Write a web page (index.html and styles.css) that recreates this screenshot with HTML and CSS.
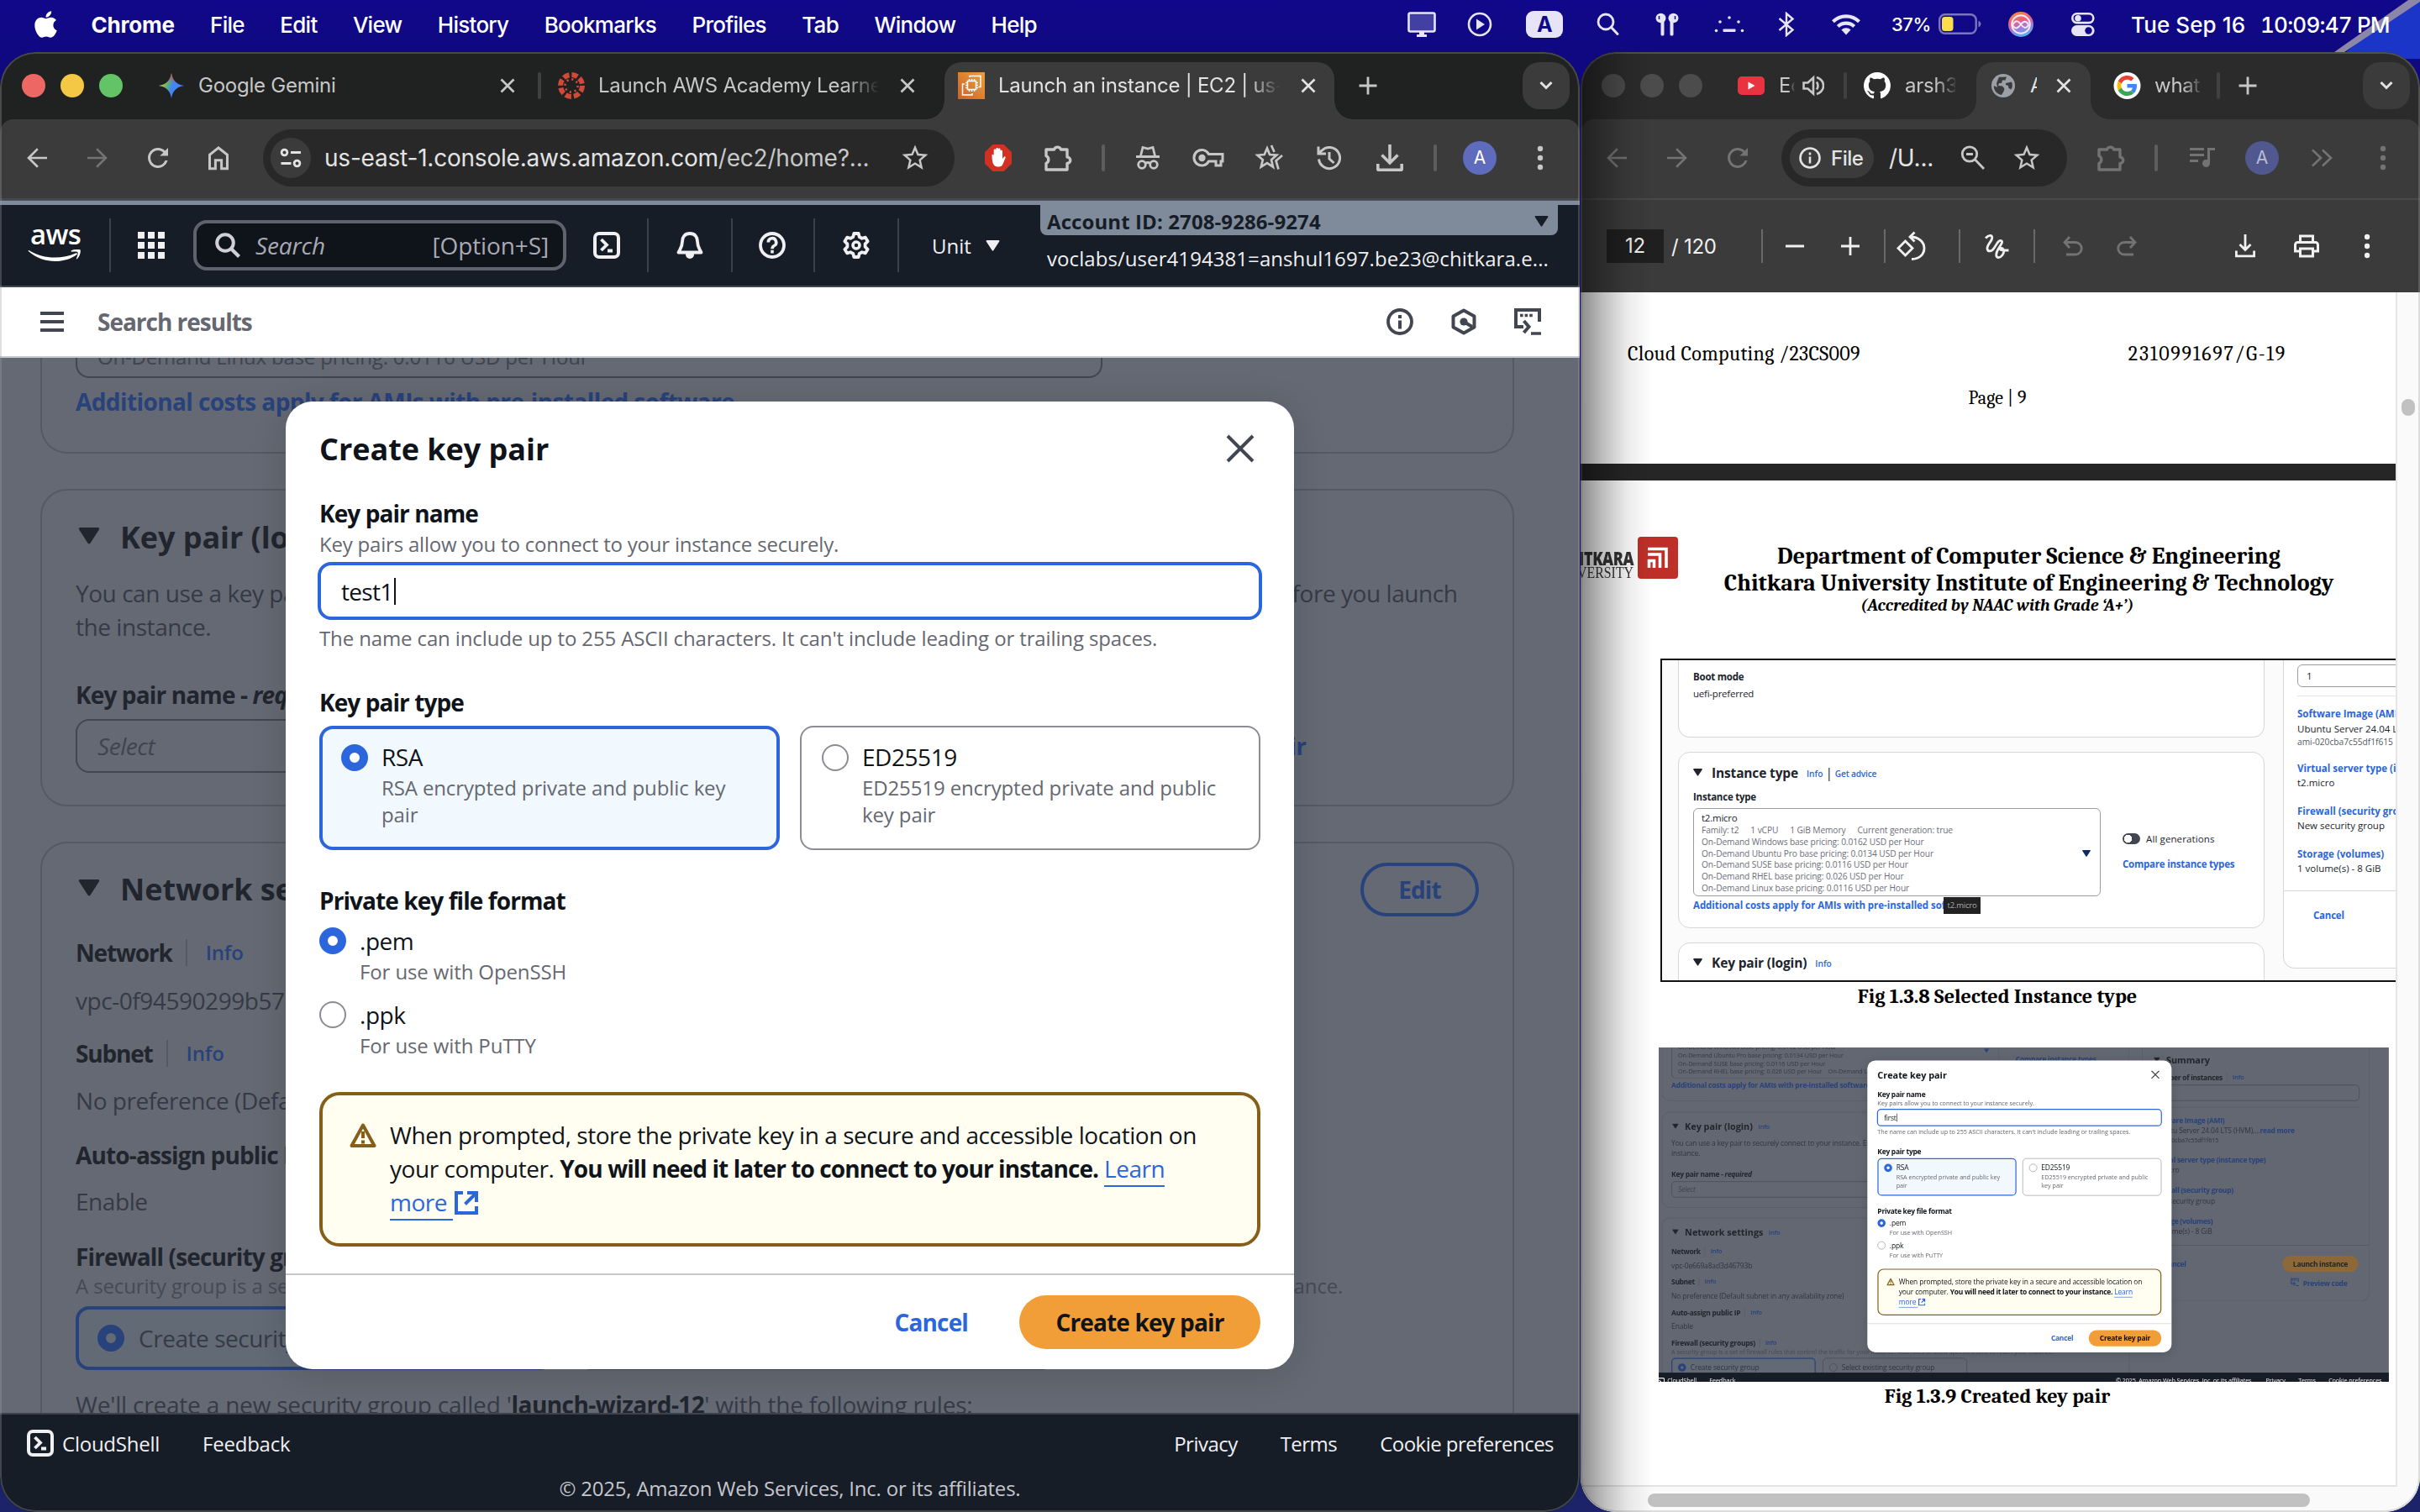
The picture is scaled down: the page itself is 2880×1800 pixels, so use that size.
FILE: index.html
```html
<!DOCTYPE html>
<html lang="en">
<head>
<meta charset="utf-8">
<title>Launch an instance | EC2</title>
<link rel="stylesheet" href="styles.css">
</head>
<body>
<svg width="0" height="0" class="defs">
  <symbol id="i-back" viewBox="0 0 24 24"><path fill="currentColor" d="M20 11.1H7.5l5.6-5.6L12 4.2l-7.9 7.8L12 19.800l1.200-1.300-5.700-5.600H20z"/></symbol>
  <symbol id="i-fwd" viewBox="0 0 24 24"><path fill="currentColor" d="M4 11.100h12.500l-5.600-5.600L12 4.200l7.900 7.800L12 19.800l-1.200-1.300 5.700-5.600H4z"/></symbol>
  <symbol id="i-reload" viewBox="0 0 24 24"><path fill="currentColor" d="M17.650 6.350A7.960 7.960 0 0 0 12 4a8 8 0 1 0 7.730 10h-2.080A6 6 0 1 1 12 6c1.660 0 3.140.69 4.220 1.780L13.500 10.400H20V4z"/></symbol>
  <symbol id="i-home" viewBox="0 0 24 24"><path fill="none" stroke="currentColor" stroke-width="2" d="M5 20.500V9.500L12 4l7 5.500v11h-4.600v-6.600H9.600v6.600z"/></symbol>
  <symbol id="i-star" viewBox="0 0 24 24"><path fill="currentColor" d="M22 9.240l-7.190-.62L12 2 9.190 8.630 2 9.240l5.460 4.730L5.820 21 12 17.270 18.180 21l-1.630-7.030zM12 15.400l-3.760 2.270 1-4.280-3.320-2.880 4.380-.38L12 6.100l1.710 4.040 4.380.38-3.320 2.880 1 4.280z"/></symbol>
  <symbol id="i-puzzle" viewBox="0 0 40 40"><path fill="none" stroke="currentColor" stroke-width="3.400" stroke-linejoin="round" d="M6 10h9.500a4.200 4.200 0 0 1 8 0H31v9a3.600 3.600 0 0 1 0 7.500V34H6v-7.500a5 5 0 0 0 0-9z"/></symbol>
  <symbol id="i-close" viewBox="0 0 20 20"><path stroke="currentColor" stroke-width="2.700" d="M2.500 2.500l15 15m0-15l-15 15"/></symbol>
  <symbol id="i-plus" viewBox="0 0 24 24"><path stroke="currentColor" stroke-width="2.800" d="M12 1.500v21M1.500 12h21"/></symbol>
  <symbol id="i-chev" viewBox="0 0 20 20"><path fill="none" stroke="currentColor" stroke-width="3" d="M3.500 6l6.500 6.500L16.500 6"/></symbol>
  <symbol id="i-kebab" viewBox="0 0 40 40"><g fill="currentColor"><circle cx="20" cy="9" r="3.200"/><circle cx="20" cy="20" r="3.200"/><circle cx="20" cy="31" r="3.200"/></g></symbol>
  <symbol id="i-down" viewBox="0 0 40 40"><path fill="none" stroke="currentColor" stroke-width="3.600" d="M20 4v22M10.500 16.500L20 26l9.500-9.500M5.800 27v6.300a1 1 0 0 0 1 1h26.400a1 1 0 0 0 1-1V27"/></symbol>
  <symbol id="i-tri" viewBox="0 0 20 16"><path fill="currentColor" d="M1.500 0h17a1.200 1.200 0 0 1 1 1.900l-8.400 13a1.300 1.300 0 0 1-2.200 0L.5 1.900A1.200 1.200 0 0 1 1.500 0z"/></symbol>
  <symbol id="i-shell" viewBox="0 0 32 32"><rect x="2" y="2" width="28" height="28" rx="5" fill="none" stroke="currentColor" stroke-width="4"/><path fill="none" stroke="currentColor" stroke-width="3.800" d="M9.500 9l6.500 6.500L9.500 22M17 22.500h6"/></symbol>
  <symbol id="i-x" viewBox="0 0 34 34"><path stroke="currentColor" stroke-width="4" d="M2 2l30 30m0-30L2 32"/></symbol>
  <symbol id="i-warn" viewBox="0 0 32 32"><path fill="none" stroke="#855f1a" stroke-width="4" stroke-linejoin="round" d="M16 3.500L29.500 28h-27z"/><path stroke="#855f1a" stroke-width="4" d="M16 11v8m0 2.500v4"/></symbol>
  <symbol id="i-ext" viewBox="0 0 28 28"><path fill="none" stroke="#2c66dd" stroke-width="4" d="M10 2H2v24h24v-8M15 2h11v11M26 2L12.500 15.500"/></symbol>
  <symbol id="i-preview" viewBox="0 0 32 32"><path fill="none" stroke="currentColor" stroke-width="4" d="M30 16V2H2v20h9M11.500 15l6 7-6 7"/><path stroke="currentColor" stroke-width="3.600" d="M7 8.500h3.600m2 0h3.600m2 0h3.600M20 30h12"/></symbol>
</svg>

<svg class="wallpaper" viewBox="0 0 140 70"><path fill="#1a35c8" d="M52 62L140-10v80H40z"/><path fill="#8c86a8" d="M38 62L126 0h14v2L50 62z"/></svg>

<header class="menubar">
  <nav class="menus">
    <svg class="apple" viewBox="0 0 384 512"><path fill="#fff" d="M318.700 268.700c-.2-36.700 16.400-64.400 50-84.800-18.800-26.900-47.200-41.700-84.700-44.600-35.500-2.800-74.300 20.700-88.500 20.700-15 0-49.400-19.700-76.400-19.700C63.300 141.200 4 184.800 4 273.500q0 39.300 14.400 81.200c12.800 36.700 59 126.700 107.200 125.200 25.200-.6 43-17.900 75.800-17.900 31.800 0 48.300 17.900 76.400 17.900 48.600-.7 90.400-82.500 102.600-119.300-65.200-30.700-61.700-90-61.700-91.900zm-56.600-164.200c27.300-32.400 24.800-61.900 24-72.500-24.100 1.400-52 16.400-67.900 34.900-17.500 19.800-27.800 44.300-25.600 71.900 26.100 2 49.900-11.400 69.500-34.300z"/></svg>
    <b>Chrome</b><span>File</span><span>Edit</span><span>View</span><span>History</span><span>Bookmarks</span><span>Profiles</span><span>Tab</span><span>Window</span><span>Help</span>
  </nav>
  <div class="status">
    <svg width="34" height="30" viewBox="0 0 34 30"><rect x="1.500" y="1.500" width="31" height="22" rx="2" fill="#4340a4" stroke="#e6e4f6" stroke-width="2.600"/><path fill="#e6e4f6" d="M14 24h6v3h3v3H11v-3h3z"/></svg>
    <svg width="30" height="30" viewBox="0 0 30 30"><circle cx="15" cy="15" r="13" fill="none" stroke="#e6e4f6" stroke-width="2.600"/><path fill="#e6e4f6" d="M11 8.500v13l10-6.500z"/></svg>
    <span class="input-src">A</span>
    <svg width="28" height="28" viewBox="0 0 28 28"><circle cx="11" cy="11" r="9" fill="none" stroke="#e6e4f6" stroke-width="2.800"/><path stroke="#e6e4f6" stroke-width="3" stroke-linecap="round" d="M17.500 17.500l7.500 8"/></svg>
    <svg width="28" height="28" viewBox="0 0 28 28"><g fill="#e6e4f6"><ellipse cx="6.500" cy="6.500" rx="6" ry="5.800"/><ellipse cx="21.500" cy="6.500" rx="6" ry="5.800"/><rect x="6.500" y="8" width="4" height="19.500" rx="1.600"/><rect x="17.500" y="8" width="4" height="19.500" rx="1.600"/></g><path stroke="#10088a" stroke-width="1.500" d="M4.500 4v4M23.500 4v4"/></svg>
    <svg width="36" height="22" viewBox="0 0 36 22"><g fill="#e6e4f6"><circle cx="2.500" cy="18.500" r="1.800"/><circle cx="7" cy="8" r="1.800"/><circle cx="18" cy="3" r="1.800"/><circle cx="29" cy="8" r="1.800"/><circle cx="33.500" cy="18.500" r="1.800"/><rect x="10.500" y="16.500" width="15" height="3.600" rx="1"/></g></svg>
    <svg width="20" height="30" viewBox="0 0 20 30"><path fill="none" stroke="#e6e4f6" stroke-width="2.400" d="M1.500 8l16 13.500L10 28V2l7.500 6.500L1.500 22"/></svg>
    <svg width="36" height="26" viewBox="0 0 36 26"><g fill="none" stroke="#e6e4f6" stroke-width="4.200"><path d="M2.500 9.800a22 22 0 0 1 31 0"/><path d="M8.300 15.600a14 14 0 0 1 19.400 0"/></g><path fill="#e6e4f6" d="M18 25.500l-5.600-6a8 8 0 0 1 11.200 0z"/></svg>
    <span class="pct">37%</span>
    <svg width="52" height="26" viewBox="0 0 52 26"><rect x="1.200" y="1.200" width="43.500" height="22.600" rx="6.500" fill="none" stroke="#7a76bd" stroke-width="2.400"/><rect x="4" y="4" width="13.500" height="17" rx="3.500" fill="#fbdd4d"/><path fill="#7a76bd" d="M47.500 8.500q3 1.500 3 4t-3 4z"/></svg>
    <svg width="30" height="30" viewBox="0 0 30 30"><defs><linearGradient id="siri" x1=".3" y1="0" x2=".6" y2="1"><stop offset="0" stop-color="#f2913d"/><stop offset=".35" stop-color="#e8617c"/><stop offset=".65" stop-color="#a07be0"/><stop offset="1" stop-color="#4db8f0"/></linearGradient></defs><circle cx="15" cy="15" r="15" fill="url(#siri)"/><circle cx="15" cy="15" r="10.800" fill="none" stroke="#f3e9f6" stroke-width="2"/><path fill="none" stroke="#f3e9f6" stroke-width="2" d="M5 16c4-7 7-5 10-1s6 6 9 1c-2-6-6-5-9-1s-6 7-10 1z"/></svg>
    <svg width="28" height="28" viewBox="0 0 28 28"><rect x="1.300" y="1.300" width="25" height="10.800" rx="5.400" fill="none" stroke="#e6e4f6" stroke-width="2.600"/><circle cx="8" cy="6.700" r="3.800" fill="#e6e4f6"/><rect x="0" y="15" width="27.600" height="13" rx="6.500" fill="#e6e4f6"/><circle cx="20.500" cy="21.500" r="4.200" fill="#10088a"/></svg>
    <span class="day">Tue Sep 16</span><span class="clock">10:09:47</span><span class="pm">PM</span>
  </div>
</header>

<section class="window win-aws">
  <div class="tabs tabs-aws">
    <div class="lights"><i class="r"></i><i class="y"></i><i class="g"></i></div>
    <svg width="32" height="32" viewBox="0 0 32 32"><defs><linearGradient id="gem" x1="0" y1=".3" x2="1" y2=".6"><stop offset=".05" stop-color="#f5c63a"/><stop offset=".35" stop-color="#5bb572"/><stop offset=".55" stop-color="#4285f4"/><stop offset="1" stop-color="#4285f4"/></linearGradient><linearGradient id="gem2" x1="0" y1="0" x2="0" y2="1"><stop offset="0" stop-color="#ea4335"/><stop offset=".4" stop-color="#ea4335" stop-opacity="0"/></linearGradient></defs><path fill="url(#gem)" d="M16 1c1.400 8.500 5.500 13.400 15 15-9.500 1.600-13.600 6.500-15 15-1.400-8.500-5.500-13.400-15-15C10.500 14.400 14.600 9.500 16 1z"/><path fill="url(#gem2)" d="M16 1c1.400 8.500 5.500 13.400 15 15-9.500 1.600-13.600 6.500-15 15-1.400-8.500-5.500-13.400-15-15C10.500 14.400 14.600 9.500 16 1z"/></svg>
    <span class="tab-t">Google Gemini</span>
    <svg class="c" width="20" height="20"><use href="#i-close"/></svg>
    <i class="tdiv"></i>
    <svg width="32" height="32" viewBox="0 0 32 32"><circle cx="16" cy="16" r="13" fill="none" stroke="#d14a38" stroke-width="6" stroke-dasharray="7.200 3.010"/><circle cx="16" cy="16" r="7.600" fill="none" stroke="#d14a38" stroke-width="2.600" stroke-dasharray="2.200 3.770"/></svg>
    <span class="tab-t fade w332">Launch AWS Academy Learner Lab</span>
    <svg class="c" width="20" height="20"><use href="#i-close"/></svg>
    <div class="tab-on">
      <svg width="32" height="32" viewBox="0 0 32 32"><defs><linearGradient id="ec2" x1="0" y1="1" x2="1" y2="0"><stop offset="0" stop-color="#c8622c"/><stop offset="1" stop-color="#f0a03a"/></linearGradient></defs><rect width="32" height="32" fill="url(#ec2)"/><g fill="none" stroke="#fff" stroke-width="1.500"><rect x="11.500" y="10.500" width="10" height="10"/><path d="M13.500 8v2.500m3-2.500v2.500m3-2.500v2.500m-6 10V23m3-2.500V23m3-2.500V23M9 12.500h2.500M9 15.500h2.500M9 18.500h2.500m10-6H24m-2.500 3H24m-2.500 3H24M14 6V4.500h13v13h-2.500M8 14H5.500v13H17V25"/></g></svg>
      <span class="tab-t fade">Launch an instance | EC2 | us-east-1</span>
      <svg class="c" width="20" height="20"><use href="#i-close"/></svg>
    </div>
    <svg class="c" width="24" height="24"><use href="#i-plus"/></svg>
    <div class="tab-menu"><svg width="20" height="20"><use href="#i-chev"/></svg></div>
  </div>
  <div class="toolbar tb-aws">
    <svg><use href="#i-back" x="2" y="2" width="36" height="36"/></svg>
    <svg class="dim"><use href="#i-fwd" x="2" y="2" width="36" height="36"/></svg>
    <svg><use href="#i-reload" x="2" y="2" width="36" height="36"/></svg>
    <svg><use href="#i-home" x="2" y="2" width="36" height="36"/></svg>
    <div class="omni">
      <div class="tune"><svg viewBox="0 0 26 26" class="s26"><g fill="none" stroke="#e3e3e3" stroke-width="2.800"><circle cx="5.500" cy="6.500" r="3.400"/><path d="M13 6.500h12M1.500 19.500h12"/><circle cx="20.500" cy="19.500" r="3.400"/></g></svg></div>
      <span class="url">us-east-1.console.aws.amazon.com<em>/ec2/home?...</em></span>
      <svg><use href="#i-star" x="1.500" y="1.500" width="37" height="37"/></svg>
    </div>
    <svg viewBox="0 0 40 40"><path fill="#d13023" d="M13.300 4h13.400L36 13.300v13.400L26.700 36H13.300L4 26.700V13.300z"/><path fill="#fff" d="M12.500 16c1.500-.5 2 .5 2.200 1.200V11c0-2 2.600-2 2.600 0V9.500c0-2 2.700-2 2.700 0V10c0-1.900 2.600-1.900 2.600 0v2c0-1.800 2.400-1.800 2.400 0v9l1.500-2c1-1.200 2.700-.6 2 1-1.500 3.500-2.500 7-4 9-1.500 2-7.500 2.200-9.500-.5-1.800-2.500-2.500-6-2.500-12.500z"/></svg>
    <svg><use href="#i-puzzle"/></svg>
    <i class="bdiv"></i>
    <svg viewBox="0 0 40 40"><g fill="none" stroke="currentColor" stroke-width="2.800"><path d="M6 18.500h28M11.500 17.500L14 7.500l6 1.500 6-1.500 2.500 10"/><circle cx="13" cy="28" r="4.300"/><circle cx="27" cy="28" r="4.300"/><path d="M17 26.500q3-2 6 0"/></g></svg>
    <svg viewBox="0 0 40 40"><g fill="none" stroke="currentColor" stroke-width="3"><path d="M20.500 15.500H37V24h-2v5h-6v-5h-8.500A9.300 9.300 0 1 1 20.500 15.500z"/></g><circle cx="12.500" cy="20" r="4.200" fill="currentColor"/></svg>
    <svg viewBox="0 0 40 40"><path fill="none" stroke="currentColor" stroke-width="2.700" d="M18 8.500l3 7.500 8.300.7-6.300 5.500 2 8.500-7-4.500-7.200 4.500 2-8.500-6.300-5.500 8.200-.7zM23 5l3.500 8M36 17l-7.500 6.500 3 10"/></svg>
    <svg viewBox="0 0 40 40"><path fill="none" stroke="currentColor" stroke-width="3" d="M7.500 21.500a12.600 12.600 0 1 0 3.500-10.300L7 15M7 6.500V15h9M20 13v8l5.500 5"/></svg>
    <svg><use href="#i-down"/></svg>
    <i class="bdiv"></i>
    <div class="avatar">A</div>
    <svg><use href="#i-kebab"/></svg>
  </div>
  <div class="band"></div>
  <div class="aws-head">
    <div class="logo"><span>aws</span><svg width="66" height="16" viewBox="0 0 66 16"><path fill="#fff" d="M1.500 1C18 11.500 40 12 57 4.500c1.500-.6 2.500.8 1.200 1.800C44 17 18 17.500 1 2.300.3 1.500.8.6 1.500 1z"/><path fill="#fff" d="M52 1.300c3-1.800 9.500-2 10.500-.8 1 1.500-.5 8-3.800 10.800-.6.5-1 .2-.8-.4.900-2.200 2.400-6.500 1.500-7.700-.8-1-5-.7-7-.4-.8 0-.9-.8-.4-1.500z"/></svg></div>
    <i class="hdiv"></i>
    <svg width="32" height="32" viewBox="0 0 32 32"><g fill="#f0f0f3"><rect width="8" height="8"/><rect x="12" width="8" height="8"/><rect x="24" width="8" height="8"/><rect y="12" width="8" height="8"/><rect x="12" y="12" width="8" height="8"/><rect x="24" y="12" width="8" height="8"/><rect y="24" width="8" height="8"/><rect x="12" y="24" width="8" height="8"/><rect x="24" y="24" width="8" height="8"/></g></svg>
    <div class="search"><svg width="30" height="30" viewBox="0 0 30 30"><circle cx="12" cy="12" r="9.800" fill="none" stroke="#d0d0d8" stroke-width="4"/><path stroke="#d0d0d8" stroke-width="4.200" d="M19 19l9.500 9.500"/></svg><em>Search</em><span>[Option+S]</span></div>
    <svg width="32" height="32"><use href="#i-shell"/></svg>
    <i class="hdiv"></i>
    <svg width="32" height="32" viewBox="0 0 32 32"><path fill="none" stroke="currentColor" stroke-width="3.800" stroke-linejoin="round" d="M16 2c-6 0-9 4-9 9.500 0 6.500-2.500 9-4.500 13h27c-2-4-4.500-6.500-4.500-13C25 6 22 2 16 2z"/><path fill="currentColor" d="M11 25h10v2a5 5 0 0 1-10 0z"/></svg>
    <i class="hdiv"></i>
    <svg width="32" height="32" viewBox="0 0 32 32"><circle cx="16" cy="16" r="14" fill="none" stroke="currentColor" stroke-width="3.800"/><path fill="none" stroke="currentColor" stroke-width="3.600" d="M11.300 12.500a4.700 4.700 0 1 1 7 4c-1.700 1-2.300 1.600-2.300 3.700M16 21.800v3.600"/></svg>
    <i class="hdiv"></i>
    <svg width="32" height="32" viewBox="0 0 32 32"><path fill="none" stroke="currentColor" stroke-width="3.800" stroke-linejoin="round" d="M13.300 2h5.400l1 4 3.200 1.800 4-1.200 2.700 4.700-3 3v3.500l3 3-2.700 4.600-4-1.200L19.700 26l-1 4h-5.400l-1-4-3.200-1.800-4 1.200-2.700-4.600 3-3v-3.500l-3-3 2.700-4.700 4 1.200L12.300 6z"/><circle cx="16" cy="16" r="4" fill="none" stroke="currentColor" stroke-width="3.600"/></svg>
    <i class="hdiv"></i>
    <span class="unit">Unit</span>
    <svg width="17" height="13"><use href="#i-tri"/></svg>
    <div class="account"><div class="acc-id"><b>Account ID: 2708-9286-9274</b><svg width="17" height="13"><use href="#i-tri"/></svg></div><span>voclabs/user4194381=anshul1697.be23@chitkara.e...</span></div>
  </div>
  <div class="crumbs">
    <div class="burger"><i></i><i></i><i></i></div>
    <b>Search results</b>
    <svg width="32" height="32" viewBox="0 0 32 32"><circle cx="16" cy="16" r="14" fill="none" stroke="currentColor" stroke-width="3.800"/><path stroke="currentColor" stroke-width="4" d="M16 8v4m0 2.500v10"/></svg>
    <svg width="32" height="32" viewBox="0 0 32 32"><path fill="none" stroke="currentColor" stroke-width="4" stroke-linejoin="round" d="M16 2.500l12.500 7v13L16 29.500l-12.500-7v-13z"/><circle cx="16" cy="16" r="4.600" fill="currentColor"/><path stroke="currentColor" stroke-width="4" d="M16 16l10 6"/></svg>
    <svg width="32" height="32"><use href="#i-preview"/></svg>
  </div>
  <main class="content">
    <div class="card c1">
      <div class="sel top"><span class="s">On-Demand Linux base pricing: 0.0116 USD per Hour</span></div>
      <b class="lnk add">Additional costs apply for AMIs with pre-installed software</b>
    </div>
    <div class="card c2">
      <h2><svg width="26" height="20"><use href="#i-tri"/></svg>Key pair (login)</h2>
      <p class="para">You can use a key pair to securely connect to your instance. Ensure that you have access to the selected key pair before you launch<br>the instance.</p>
      <b class="lab">Key pair name - <em>required</em></b>
      <div class="selrow"><div class="sel"><em>Select</em></div><b class="lnk">Create new key pair</b></div>
    </div>
    <div class="card c3">
      <div class="hrow"><h2><svg width="26" height="20"><use href="#i-tri"/></svg>Network settings</h2><span class="edit">Edit</span></div>
      <div class="r n1"><b>Network</b><b class="info">Info</b></div>
      <div class="r n2">vpc-0f94590299b57e3a1</div>
      <div class="r n3"><b>Subnet</b><b class="info">Info</b></div>
      <div class="r n4">No preference (Default subnet in any availability zone)</div>
      <div class="r n5"><b>Auto-assign public IP</b></div>
      <div class="r n6">Enable</div>
      <div class="r n7"><b>Firewall (security groups)</b></div>
      <div class="hint">A security group is a set of firewall rules that control the traffic for your instance. Add rules to allow specific traffic to reach your instance.</div>
      <div class="tiles"><div class="tile on"><i></i>Create security group</div><div class="tile"><i></i>Select existing security group</div></div>
      <div class="r n8">We'll create a new security group called '<b>launch-wizard-12</b>' with the following rules:</div>
    </div>
    <div class="modal">
      <div class="m-body">
        <div class="m-title"><h1>Create key pair</h1><svg width="34" height="34"><use href="#i-x"/></svg></div>
        <b class="m-lab first">Key pair name</b>
        <span class="m-sub">Key pairs allow you to connect to your instance securely.</span>
        <div class="m-input">test1<i class="caret"></i></div>
        <span class="m-sub help">The name can include up to 255 ASCII characters. It can't include leading or trailing spaces.</span>
        <b class="m-lab">Key pair type</b>
        <div class="m-tiles">
          <div class="m-tile on"><i class="radio on"></i><div><span>RSA</span><small>RSA encrypted private and public key pair</small></div></div>
          <div class="m-tile"><i class="radio"></i><div><span>ED25519</span><small>ED25519 encrypted private and public key pair</small></div></div>
        </div>
        <b class="m-lab">Private key file format</b>
        <div class="m-opt"><i class="radio on"></i><div><span>.pem</span><small>For use with OpenSSH</small></div></div>
        <div class="m-opt two"><i class="radio"></i><div><span>.ppk</span><small>For use with PuTTY</small></div></div>
        <div class="m-alert"><svg width="32" height="32"><use href="#i-warn"/></svg><p>When prompted, store the private key in a secure and accessible location on<br>your computer. <b>You will need it later to connect to your instance.</b> <a>Learn</a><br><a>more </a><svg class="ext" width="28" height="28"><use href="#i-ext"/></svg></p></div>
      </div>
      <div class="m-foot"><b>Cancel</b><b class="btn">Create key pair</b></div>
    </div>
  </main>
  <footer class="aws-foot">
    <div class="f1"><svg width="32" height="32"><use href="#i-shell"/></svg><span class="cs">CloudShell</span><span class="fb-link">Feedback</span><span class="push">Privacy</span><span>Terms</span><span>Cookie preferences</span></div>
    <div class="f2">© 2025, Amazon Web Services, Inc. or its affiliates.</div>
  </footer>
</section>

<section class="window win-pdf">
  <div class="tabs tabs-pdf">
    <div class="lights off"><i></i><i></i><i></i></div>
    <svg width="32" height="24" viewBox="0 0 32 24"><rect y="1" width="32" height="22" rx="5" fill="#ea3340"/><path fill="#fff" d="M12.500 7.500v9l8-4.500z"/></svg>
    <span class="tab-t fade w20">Ec2 launch</span>
    <svg width="26" height="26" viewBox="0 0 26 26"><path fill="none" stroke="#c7c7c7" stroke-width="2.600" d="M1.500 9.500h5L13 3.500v19l-6.500-6h-5zM17 8.500q3 4.500 0 9M17 3q8 3 8 10t-8 10"/></svg>
    <i class="tdiv"></i>
    <svg width="32" height="32" viewBox="0 0 16 16"><path fill="#fff" d="M8 0C3.580 0 0 3.580 0 8c0 3.540 2.290 6.530 5.470 7.590.4.070.55-.17.55-.38 0-.19-.01-.82-.01-1.490-2.010.37-2.530-.49-2.690-.94-.09-.23-.48-.94-.82-1.130-.28-.15-.68-.52-.01-.53.63-.01 1.080.58 1.230.82.72 1.210 1.870.87 2.330.66.07-.52.28-.87.51-1.070-1.780-.2-3.640-.89-3.640-3.950 0-.87.31-1.590.82-2.150-.08-.2-.36-1.020.08-2.120 0 0 .67-.21 2.200.82a7.640 7.640 0 0 1 4 0c1.530-1.040 2.200-.82 2.200-.82.44 1.100.16 1.920.08 2.120.51.56.82 1.270.82 2.150 0 3.070-1.870 3.750-3.650 3.950.29.25.54.73.54 1.480 0 1.070-.01 1.930-.01 2.200 0 .21.15.46.55.38A8.010 8.010 0 0 0 16 8c0-4.420-3.580-8-8-8z"/></svg>
    <span class="tab-t fade w58">arsh3005</span>
    <div class="tab-on">
      <svg width="28" height="28" viewBox="0 0 28 28"><circle cx="14" cy="14" r="14" fill="#9aa0a6"/><path fill="#3b3b3b" d="M9 3.500c3 1 6.500-.5 9 0l-1.500 4H13l-1 3.500H9l-1 3 5 .5 2.500 3-1 3.500-2.500 4C6 24 2.500 19 2.800 14L7 16l-1-5zM17 11l7-1.500q2 5-.5 9l-3-1.500-.5-3-3-1z"/></svg>
      <span class="tab-t fade">Assignment</span>
      <svg class="c" width="20" height="20"><use href="#i-close"/></svg>
    </div>
    <svg width="33" height="32" viewBox="-8 -8 64 64"><circle cx="24" cy="24" r="32" fill="#fff"/><path fill="#EA4335" d="M24 9.500c3.540 0 6.710 1.220 9.210 3.600l6.850-6.850C35.900 2.380 30.470 0 24 0 14.620 0 6.510 5.380 2.560 13.220l7.980 6.190C12.430 13.720 17.740 9.500 24 9.500z"/><path fill="#4285F4" d="M46.980 24.550c0-1.570-.15-3.090-.38-4.550H24v9.020h12.940c-.58 2.960-2.260 5.480-4.780 7.180l7.730 6c4.510-4.180 7.090-10.360 7.090-17.650z"/><path fill="#FBBC05" d="M10.530 28.590A14.500 14.500 0 0 1 9.770 24c0-1.600.27-3.140.76-4.590l-7.980-6.190A23.900 23.900 0 0 0 0 24c0 3.880.92 7.540 2.560 10.780z"/><path fill="#34A853" d="M24 48c6.480 0 11.930-2.130 15.890-5.810l-7.730-6c-2.150 1.450-4.920 2.300-8.160 2.300-6.260 0-11.570-4.220-13.470-9.910l-7.980 6.190C6.510 42.620 14.620 48 24 48z"/></svg>
    <span class="tab-t fade w54">what is</span>
    <i class="tdiv"></i>
    <svg class="c" width="24" height="24"><use href="#i-plus"/></svg>
    <div class="tab-menu"><svg width="20" height="20"><use href="#i-chev"/></svg></div>
  </div>
  <div class="toolbar tb-pdf">
    <svg class="dim"><use href="#i-back" x="2" y="2" width="36" height="36"/></svg>
    <svg class="dim"><use href="#i-fwd" x="2" y="2" width="36" height="36"/></svg>
    <svg class="dim"><use href="#i-reload" x="2" y="2" width="36" height="36"/></svg>
    <div class="omni">
      <div class="chip"><svg viewBox="0 0 26 26" class="s26"><circle cx="13" cy="13" r="11.500" fill="none" stroke="#e3e3e3" stroke-width="2.600"/><path stroke="#e3e3e3" stroke-width="2.600" d="M13 6.500v3m0 2v8"/></svg>File</div>
      <span class="url">/U...</span>
      <svg viewBox="0 0 40 40"><g fill="none" stroke="currentColor" stroke-width="2.800"><circle cx="16" cy="15.500" r="8.700"/><path d="M12 15.500h8M22 21.500l11 11.500"/></g></svg>
      <svg><use href="#i-star" x="1.500" y="1.500" width="37" height="37"/></svg>
    </div>
    <svg class="dim"><use href="#i-puzzle"/></svg>
    <i class="bdiv"></i>
    <svg class="dim" viewBox="0 0 40 40"><path fill="none" stroke="currentColor" stroke-width="3" d="M6 9.500h17M6 16.500h17M6 23.500h10M36 9.500h-7.500V26"/><circle cx="25.500" cy="26.500" r="4.500" fill="currentColor"/></svg>
    <div class="avatar">A</div>
    <svg class="dim" viewBox="0 0 40 40"><path fill="none" stroke="currentColor" stroke-width="2.600" d="M8 10.500l10 9.500-10 9.500M20 10.500l10 9.500-10 9.500"/></svg>
    <svg class="dim"><use href="#i-kebab"/></svg>
  </div>
  <div class="pdf-bar">
    <span class="pg">12</span><span class="tot">/ 120</span><i></i>
    <svg width="22" height="22" viewBox="0 0 22 22"><path stroke="currentColor" stroke-width="3" d="M0 11h22"/></svg>
    <svg width="22" height="22" viewBox="0 0 22 22"><path stroke="currentColor" stroke-width="2.800" d="M0 11h22M11 0v22"/></svg>
    <i></i>
    <svg width="36" height="36" viewBox="0 0 36 36"><path fill="none" stroke="currentColor" stroke-width="2.800" d="M10.500 12l8.500 8.500-8.500 8.500L2 20.500zM21.500 1.500L16 7l5.500 5.500M17 7c9 0 16 6 16 13.500S27 33.500 18 33.500"/></svg>
    <i></i>
    <svg width="30" height="30" viewBox="0 0 30 30"><path fill="none" stroke="currentColor" stroke-width="2.800" d="M2 5.500C6 1 11 1.500 9.500 6.500 8.500 10 3.500 14 4 18c.5 4 5 4 8-.5 3-4 5-10 8.500-9 3 1-1 6-3.500 10-2.500 4.500-3.500 9.500 0 10s7.500-5 6.500-8.500-5-3-4.500-1.500 4 1.500 10.500 1.500"/></svg>
    <i></i>
    <svg class="dim" width="26" height="26" viewBox="0 0 26 26"><path fill="none" stroke="currentColor" stroke-width="2.800" d="M9 2L3 8.500 9 15M3.500 8.500H16a7 7 0 0 1 0 14.500H5"/></svg>
    <svg class="dim" width="26" height="26" viewBox="0 0 26 26"><path fill="none" stroke="currentColor" stroke-width="2.800" d="M17 2l6 6.500-6 6.500M22.500 8.500H10A7 7 0 0 0 10 23h11"/></svg>
    <svg width="28" height="28" viewBox="0 0 28 28"><path fill="none" stroke="currentColor" stroke-width="2.800" d="M14 0v18M7.500 12l6.500 6.500 6.500-6.500M3.400 19.500v6.300h21.200v-6.300"/></svg>
    <svg width="36" height="36" viewBox="0 0 24 24"><path fill="currentColor" d="M19 8h-1V3H6v5H5c-1.660 0-3 1.340-3 3v6h4v4h12v-4h4v-6c0-1.660-1.340-3-3-3zM8 5h8v3H8zm8 14H8v-4h8zm2-4v-2H6v2H4v-4c0-.55.45-1 1-1h14c.55 0 1 .45 1 1v4z"/></svg>
    <svg width="40" height="40"><use href="#i-kebab" x="-17"/></svg>
  </div>
  <div class="viewer">
    <div class="pages">
      <article class="page p1">
        <div class="ph"><span>Cloud Computing /23CS009</span><span class="roll">2310991697/G-19</span></div>
        <div class="pn">Page | 9</div>
      </article>
      <article class="page p2">
        <div class="doc-head">
          <div class="chit"><div class="words"><b>CHITKARA</b><span>UNIVERSITY</span></div><svg width="48" height="50" viewBox="0 0 48 50"><rect width="48" height="50" rx="4" fill="#be2f28"/><path fill="none" stroke="#fff" stroke-width="3.600" d="M12 14.500h22V37M12 21h14.500v16M12 28.500h7.500V37M13.500 27v10"/></svg></div>
          <div class="titles"><div class="t1">Department of Computer Science &amp; Engineering</div><div class="t1 t2">Chitkara University Institute of Engineering &amp; Technology</div><div class="t3">(Accredited by NAAC with Grade ‘A+’)</div></div>
        </div>
        <figure class="fig1">
          <div class="fl">
            <div class="fc fa"><b>Boot mode</b><span>uefi-preferred</span></div>
            <div class="fc fb">
              <h3><svg width="11" height="9"><use href="#i-tri"/></svg>Instance type<small>Info</small><u>|</u><small>Get advice</small></h3>
              <b class="fit">Instance type</b>
              <div class="frow">
                <div class="fsel"><div><span>t2.micro</span><p class="spec"><i>Family: t2</i><i>1 vCPU</i><i>1 GiB Memory</i><i>Current generation: true</i></p><p>On-Demand Windows base pricing: 0.0162 USD per Hour</p><p>On-Demand Ubuntu Pro base pricing: 0.0134 USD per Hour</p><p>On-Demand SUSE base pricing: 0.0116 USD per Hour</p><p>On-Demand RHEL base pricing: 0.026 USD per Hour</p><p>On-Demand Linux base pricing: 0.0116 USD per Hour</p></div><svg width="10" height="8"><use href="#i-tri"/></svg></div>
                <div class="fopt"><div><i class="tog"></i>All generations</div><b class="lk">Compare instance types</b></div>
              </div>
              <div class="fadd"><b class="lk">Additional costs apply for AMIs with pre-installed software</b><span class="tip">t2.micro</span></div>
            </div>
            <div class="fc fd"><h3><svg width="11" height="9"><use href="#i-tri"/></svg>Key pair (login)<small>Info</small></h3></div>
          </div>
          <div class="fr">
            <div class="fnum">1</div>
            <div class="fsum"><b class="lk">Software Image (AMI)</b><span class="a">Ubuntu Server 24.04 LTS</span><span class="b">ami-020cba7c55df1f615</span><b class="lk">Virtual server type (instance type)</b><span>t2.micro</span><b class="lk">Firewall (security group)</b><span>New security group</span><b class="lk">Storage (volumes)</b><span>1 volume(s) - 8 GiB</span></div>
            <div class="fcan"><b class="lk">Cancel</b></div>
          </div>
        </figure>
        <div class="cap">Fig 1.3.8 Selected Instance type</div>
        <figure class="fig2">
          <div class="shot">
            <div class="shot-main">
              <div class="card c1">
                <div class="sel top"><div><p>On-Demand Windows base pricing: 0.0162 USD per Hour</p><p>On-Demand Ubuntu Pro base pricing: 0.0134 USD per Hour</p><p>On-Demand SUSE base pricing: 0.0116 USD per Hour</p><p>On-Demand RHEL base pricing: 0.026 USD per Hour &nbsp;&nbsp; On-Demand Linux base pricing: 0.0116 USD per Hour</p></div><svg width="22" height="16"><use href="#i-tri"/></svg></div><b class="lnk cmp">Compare instance types</b>
                <b class="lnk add">Additional costs apply for AMIs with pre-installed software</b>
              </div>
              <div class="card c2">
                <h2><svg width="26" height="20"><use href="#i-tri"/></svg>Key pair (login)<b class="inf">Info</b></h2>
                <p class="para">You can use a key pair to securely connect to your instance. Ensure that you have access to the selected key pair before you launch the<br>instance.</p>
                <b class="lab">Key pair name - <em>required</em></b>
                <div class="sel"><em>Select</em></div>
              </div>
              <div class="card c3">
                <div class="hrow"><h2><svg width="26" height="20"><use href="#i-tri"/></svg>Network settings<b class="inf">Info</b></h2></div>
                <div class="r n1"><b>Network</b><b class="info">Info</b></div>
                <div class="r n2">vpc-0e669a8ad3d46793b</div>
                <div class="r n3"><b>Subnet</b><b class="info">Info</b></div>
                <div class="r n4">No preference (Default subnet in any availability zone)</div>
                <div class="r n5"><b>Auto-assign public IP</b><b class="info">Info</b></div>
                <div class="r n6">Enable</div>
                <div class="r n7"><b>Firewall (security groups)</b><b class="info">Info</b></div>
                <div class="hint">A security group is a set of firewall rules that control the traffic for your instance. Add rules to allow specific traffic to reach your instance.</div>
                <div class="tiles"><div class="tile on"><i></i>Create security group</div><div class="tile"><i></i>Select existing security group</div></div>
              </div>
            </div>
            <div class="shot-side">
              <h2><svg width="26" height="20"><use href="#i-tri"/></svg>Summary</h2>
              <div class="r"><b>Number of instances</b><b class="info">Info</b></div>
              <div class="sel"></div>
              <div class="ss"><b class="lnk">Software Image (AMI)</b><span>Ubuntu Server 24.04 LTS (HVM),...<b class="lnk">read more</b></span><small>ami-020cba7c55df1f615</small><b class="lnk">Virtual server type (instance type)</b><span>t2.micro</span><b class="lnk">Firewall (security group)</b><span>New security group</span><b class="lnk">Storage (volumes)</b><span>1 volume(s) - 8 GiB</span></div>
              <div class="sb"><b class="lnk">Cancel</b><b class="launch">Launch instance</b></div>
              <div class="sp lnk"><svg width="32" height="32"><use href="#i-preview"/></svg><b>Preview code</b></div>
            </div>
            <div class="shot-foot"><svg width="32" height="32"><use href="#i-shell"/></svg><span class="cs">CloudShell</span><span>Feedback</span><span class="push">© 2025, Amazon Web Services, Inc. or its affiliates.</span><span>Privacy</span><span>Terms</span><span>Cookie preferences</span></div>
            <div class="modal">
              <div class="m-body">
                <div class="m-title"><h1>Create key pair</h1><svg width="34" height="34"><use href="#i-x"/></svg></div>
                <b class="m-lab first">Key pair name</b>
                <span class="m-sub">Key pairs allow you to connect to your instance securely.</span>
                <div class="m-input">first<i class="caret"></i></div>
                <span class="m-sub help">The name can include up to 255 ASCII characters. It can't include leading or trailing spaces.</span>
                <b class="m-lab">Key pair type</b>
                <div class="m-tiles">
                  <div class="m-tile on"><i class="radio on"></i><div><span>RSA</span><small>RSA encrypted private and public key pair</small></div></div>
                  <div class="m-tile"><i class="radio"></i><div><span>ED25519</span><small>ED25519 encrypted private and public key pair</small></div></div>
                </div>
                <b class="m-lab">Private key file format</b>
                <div class="m-opt"><i class="radio on"></i><div><span>.pem</span><small>For use with OpenSSH</small></div></div>
                <div class="m-opt two"><i class="radio"></i><div><span>.ppk</span><small>For use with PuTTY</small></div></div>
                <div class="m-alert"><svg width="32" height="32"><use href="#i-warn"/></svg><p>When prompted, store the private key in a secure and accessible location on<br>your computer. <b>You will need it later to connect to your instance.</b> <a>Learn</a><br><a>more </a><svg class="ext" width="28" height="28"><use href="#i-ext"/></svg></p></div>
              </div>
              <div class="m-foot"><b>Cancel</b><b class="btn">Create key pair</b></div>
            </div>
          </div>
        </figure>
        <div class="cap">Fig 1.3.9 Created key pair</div>
      </article>
    </div>
    <div class="vscroll"><i></i></div>
    <div class="hscroll"><i></i></div>
  </div>
</section>
</body>
</html>
```
FILE: styles.css
```css
* { box-sizing: border-box; }
body {
  margin: 0; width: 2880px; height: 1800px; position: relative; overflow: hidden;
  background: linear-gradient(#10088a 0, #0f0880 70px, #1a1a66 1600px, #1c2368);
  font-family: "Open Sans", "Noto Sans", sans-serif;
}
h1, h2, h3, p, figure { margin: 0; }
svg { display: block; flex: none; }
i { font-style: normal; }
.defs { position: absolute; }

/* Menu bar */
.wallpaper { position: absolute; right: 0; top: 0; width: 140px; height: 70px; }
.menubar { position: relative; height: 62px; padding-bottom: 4px; display: flex; justify-content: space-between; align-items: center; color: #fff; font: 500 26px Inter, sans-serif; letter-spacing: -.028em; }
.menus { display: flex; align-items: center; gap: 42.400px; padding-left: 41px; }
.menus b { font-weight: 700; letter-spacing: -.008em; }
.apple { width: 27px; height: 36px; margin-right: -2px; }
.status { display: grid; align-items: center; white-space: nowrap; width: 1205px;
  grid-template-columns: 71px 70px 84px 70px 70px 76px 63px 72px 56px 83px 75px 71px 154px 115px 1fr; }
.input-src { width: 44px; height: 32px; border-radius: 9px; background: #e6e4f6; color: #10088a; font-weight: 700; font-size: 25px; line-height: 32px; text-align: center; }
.pct { font-size: 22px; letter-spacing: -.02em; }
.day { letter-spacing: .004em; }
.clock { font-variant-numeric: tabular-nums; letter-spacing: -.03em; }
.pm { letter-spacing: -.04em; }

/* Window chrome */
.window { position: absolute; top: 62px; height: 1738px; border-radius: 42px; overflow: hidden; display: flex; flex-direction: column; }
.window::after { content: ""; position: absolute; inset: 0; border-radius: 42px; box-shadow: inset 0 0 0 2px rgba(160, 160, 160, .32); pointer-events: none; }
.win-aws { left: 0; width: 1880px; background: #202221; }
.win-pdf { left: 1881px; width: 999px; background: #2b2b2b; }
.win-pdf::before { content: ""; position: absolute; z-index: 3; left: 0; top: 0; bottom: 0; width: 86px; background: linear-gradient(90deg, rgba(0, 0, 0, .46), rgba(0, 0, 0, .26) 26px, rgba(0, 0, 0, .08) 56px, transparent); pointer-events: none; }
.tabs { height: 80px; flex: none; display: grid; align-items: center; color: #c7c7c7; font: 24px Inter, sans-serif; letter-spacing: -.01em; }
.tabs-aws { grid-template-columns: 162px 48px 358px 46px 24px 48px 358px 54px 492px 196px 1fr; padding-left: 26px; }
.tabs-pdf { grid-template-columns: 162px 49px 28px 49px 24px 49px 85px 163px 49px 74px 25px 149px 1fr; padding-left: 25px; }
.lights { display: flex; gap: 18px; }
.lights i { width: 28px; height: 28px; border-radius: 50%; background: #4c4c4c; }
.lights .r { background: #ed6765; } .lights .y { background: #f4c844; } .lights .g { background: #62c466; }
.tab-t { white-space: nowrap; overflow: hidden; line-height: 34px; }
.fade { -webkit-mask-image: linear-gradient(90deg, #000 calc(100% - 40px), transparent); mask-image: linear-gradient(90deg, #000 calc(100% - 40px), transparent); }
.w332 { width: 334px; } .w20 { width: 19px; } .w58 { width: 60px; } .w54 { width: 56px; }
.w20.fade { -webkit-mask-image: linear-gradient(90deg, #000 60%, transparent); mask-image: linear-gradient(90deg, #000 60%, transparent); }
.w58.fade, .w54.fade { -webkit-mask-image: linear-gradient(90deg, #000 60%, rgba(0, 0, 0, .15)); mask-image: linear-gradient(90deg, #000 60%, rgba(0, 0, 0, .15)); }
.tdiv { width: 4px; height: 32px; background: #3f4140; border-radius: 2px; }
.tab-on { position: relative; align-self: end; height: 68px; width: 464px; border-radius: 20px 20px 0 0; background: #3b3b3b; color: #e3e3e3; display: flex; align-items: center; padding: 0 21px 12px 16px; }
.tab-on .tab-t { margin-left: 16px; width: 336px; margin-right: auto; }
.tabs-pdf .tab-on { width: 136px; padding: 0 22px 12px 18px; }
.tabs-pdf .tab-on .tab-t { width: 8px; margin-left: 18px; -webkit-mask-image: none; mask-image: none; }
.tab-on::before, .tab-on::after { content: ""; position: absolute; bottom: 0; width: 22px; height: 22px; }
.tab-on::before { left: -22px; background: radial-gradient(circle at 0 0, transparent 21.500px, #3b3b3b 22px); }
.tab-on::after { right: -22px; background: radial-gradient(circle at 100% 0, transparent 21.500px, #3b3b3b 22px); }
.tab-menu { width: 56px; height: 56px; border-radius: 20px; background: #3b3b3b; color: #e3e3e3; display: grid; place-items: center; }

.toolbar { height: 96px; flex: none; background: #3b3b3b; border-bottom: 2px solid #464849; display: flex; align-items: center; gap: 32px; padding: 0 0 2px 24px; color: #c7c7c7; border-radius: 16px 16px 0 0; }
.toolbar svg { width: 40px; height: 40px; }
.toolbar .dim, .pdf-bar .dim { color: #737373; }
.tb-pdf { padding-left: 23px; }
.omni { height: 68px; border-radius: 34px; background: #282828; display: flex; align-items: center; font: 28px Inter, sans-serif; letter-spacing: -.006em; color: #e3e3e3; }
.omni svg { color: #c7c7c7; }
.toolbar .s26 { width: 26px; height: 26px; }
.tb-aws .omni { width: 823px; margin: 0 0 0 1px; padding: 0 27px 0 9px; }
.tb-aws .omni + svg, .tb-aws .bdiv { margin-right: -.5px; margin-left: -.5px; }
.tb-pdf .omni { width: 340px; padding: 0 28px 0 10px; gap: 24px; }
.tb-pdf .omni .url { width: 60px; margin-left: -6px; }
.tune { width: 48px; height: 48px; border-radius: 50%; background: #3b3b3b; display: grid; place-items: center; margin-right: 16px; }
.chip { width: 106px; height: 48px; border-radius: 24px; background: #3b3b3b; display: flex; align-items: center; gap: 12px; padding-left: 11px; font-size: 24px; font-weight: 500; letter-spacing: -.02em; }
.url { white-space: nowrap; }
.url em { font-style: normal; color: #c7c7c7; }
.tb-aws .url { margin-right: auto; letter-spacing: -.0075em; }
.bdiv { width: 4px; height: 32px; border-radius: 2px; background: #5d5f5e; }
.avatar { width: 40px; height: 40px; border-radius: 50%; background: #5f6bbd; color: #fff; font: 21px/40px Inter, sans-serif; text-align: center; }
.tb-pdf .avatar { background: #50588f; color: #b9bcd0; }

/* AWS console header */
.band { height: 6px; flex: none; background: #7f8b9b; border-top: 1px solid #4a515c; }
.aws-head { height: 98px; flex: none; background: #161d26; border-bottom: 2px solid #424650; color: #f0f0f3; display: grid; align-items: center; padding-left: 33px; white-space: nowrap;
  grid-template-columns: 97px 34px 66px 476px 64px 35px 65px 33px 65px 35px 65px 41px 64px 65px 1fr; }
.logo { width: 66px; color: #fff; font-weight: 600; }
.logo span { display: block; font-size: 33px; line-height: 26px; letter-spacing: -.02em; margin: -6px 0 0 3px; }
.logo svg { margin-top: 5px; }
.hdiv { width: 2px; height: 64px; background: #3a414c; }
.search { width: 444px; height: 60px; border: 4px solid #5f636e; border-radius: 16px; background: #0f141a; display: flex; align-items: center; padding: 0 17px 0 22px; font-size: 28px; letter-spacing: -.004em; color: #a9aab4; }
.search em { margin: 0 auto 0 18px; }
.unit { font-size: 24px; }
.account { align-self: start; width: 616px; font-size: 24px; }
.acc-id { position: relative; height: 36px; border-radius: 0 0 8px 8px; background: #7f8b9b; color: #161d26; display: flex; align-items: center; justify-content: space-between; padding: 2px 11px 0 8px; letter-spacing: .004em; }
.account span { display: block; line-height: 32px; margin: 12px 0 0 8px; letter-spacing: .003em; }
.crumbs { height: 84px; flex: none; background: #fff; border-bottom: 2px solid #c6c9d0; display: grid; align-items: center; padding: 0 0 0 48px; color: #424650; grid-template-columns: 68px 1534px 76px 76px 1fr; }
.crumbs b { font-size: 28px; color: #656871; letter-spacing: -.036em; }
.burger { display: flex; flex-direction: column; gap: 6px; width: 28px; }
.burger i { height: 4px; background: #424650; }

/* Dimmed launch form */
.content { position: relative; flex: none; height: 1256px; overflow: hidden; background: #656973; padding-left: 48px; color: #353a46; }
.content, .shot { font-size: 28px; line-height: 40px; letter-spacing: -.016em; white-space: nowrap; }
.content b, .shot b { letter-spacing: -.031em; }
.card { width: 1754px; border: 2px solid #555963; border-radius: 32px; padding: 0 40px; }
.card > b, .card > .hint { display: block; }
.c1 { height: 114px; border-top: 0; border-radius: 0 0 32px 32px; }
.card b, .shot-side b { color: #20252e; }
.card b.lnk, .shot-side b.lnk, .lnk b { color: #28427b; }
.sel { width: 1222px; height: 64px; border: 2px solid #424650; border-radius: 16px; padding: 0 24px; line-height: 60px; color: #3f444f; }
.sel.top { height: 24px; border-top: 0; border-radius: 0 0 16px 16px; font-size: 24px; overflow: hidden; display: flex; align-items: flex-start; }
.sel .s { display: block; line-height: 36px; margin-top: -19px; letter-spacing: -.008em; }
.card b.add { margin-top: 8px; letter-spacing: -.0213em; }
.c2 { height: 378px; margin-top: 42px; padding-top: 34px; }
h2 { font-size: 36px; line-height: 44px; color: #20252e; letter-spacing: -.002em; display: flex; align-items: center; gap: 24px; padding-left: 3px; }
h2 svg { margin-bottom: 5px; }
.para { margin-top: 24px; }
.lab { margin: 41px 0 9px; }
.selrow { display: flex; width: 1464px; justify-content: space-between; line-height: 64px; }
.c3 { height: 720px; margin-top: 42px; padding-top: 23px; }
.hrow { height: 64px; display: flex; align-items: center; justify-content: space-between; }
.edit { width: 141px; height: 64px; border: 4px solid #28427b; border-radius: 32px; color: #28427b; font-weight: 700; letter-spacing: -.03em; line-height: 56px; text-align: center; }
.r { display: flex; align-items: center; white-space: pre; }
.info, .inf { font-size: 24px; }
.card .info, .shot-side .info, .card .inf { color: #28427b; letter-spacing: -.01em; font-weight: 600; }
.info { margin-left: 16px; padding-left: 22px; border-left: 2px solid #555963; line-height: 32px; }
.inf { margin-left: -2px; }
.n1 { margin-top: 23px; } .n2 { margin-top: 17px; } .n3 { margin-top: 23px; } .n4 { margin-top: 16px; }
.n1 b:first-child, .n3 b:first-child { letter-spacing: -.042em; }
.n5 { margin-top: 25px; } .n6 { margin-top: 15px; } .n7 { margin-top: 26px; }
.n8 { margin-top: 21px; letter-spacing: -.007em; }
.content .n8 b { letter-spacing: -.02em; }
.hint { font-size: 24px; line-height: 32px; letter-spacing: -.005em; color: #454a55; margin-top: -1px; }
.tiles { display: flex; gap: 28px; margin-top: 8px; }
.tile { width: 569px; height: 76px; border: 2px solid #424650; border-radius: 16px; line-height: 72px; display: flex; align-items: center; gap: 17px; padding-left: 24px; }
.tile i { width: 32px; height: 32px; border-radius: 50%; border: 2px solid #424650; }
.tile.on { border: 4px solid #28427b; padding-left: 22px; background: #626a76; }
.tile.on i { border: 10px solid #28427b; }

/* Dialog */
.modal { position: absolute; left: 340px; top: 52px; width: 1200px; height: 1152px; border-radius: 32px; background: #fff; color: #0f141a; box-shadow: 0 6px 40px rgba(15, 20, 26, .16); }
.m-body { padding: 35px 40px 31px; display: flex; flex-direction: column; border-bottom: 2px solid #c6c6cd; height: 1040px; }
.m-title { display: flex; justify-content: space-between; padding-right: 7px; }
.m-title svg { color: #424650; margin-top: 4px; }
h1 { font-size: 36px; line-height: 44px; letter-spacing: -.001em; }
.m-lab { margin-top: 40px; }
.m-lab.first { margin-top: 34px; }
.modal .m-lab, .shot .modal .m-lab { letter-spacing: -.033em; }
.m-sub, .modal small { font-size: 24px; line-height: 32px; letter-spacing: -.0085em; color: #656871; }
.modal small { letter-spacing: -.005em; position: relative; top: 1px; }
.m-sub { margin-top: 1px; }
.m-sub.help { margin-top: 6px; letter-spacing: -.0052em; }
.m-input { height: 69px; border: 4px solid #2c66dd; border-radius: 16px; margin: 5px -2px 0; line-height: 60px; padding-left: 24px; display: flex; align-items: center; letter-spacing: -.025em; }
.caret { width: 2px; height: 32px; background: #0f141a; margin-left: 1px; }
.m-tiles { display: flex; gap: 24px; margin-top: 8px; }
.m-tile { width: 548px; height: 148px; border: 2px solid #8c8c94; border-radius: 16px; display: flex; gap: 16px; padding: 15px 36px 0 24px; white-space: normal; }
.m-tile.on { border: 4px solid #2c66dd; background: #f1f9ff; padding: 13px 50px 0 22px; }
.m-tile span, .m-tile small, .m-opt span, .m-opt small { display: block; }
.radio { flex: none; width: 32px; height: 32px; border-radius: 50%; border: 2px solid #8c8c94; margin-top: 5px; background: #fff; }
.radio.on { border: 10px solid #2c66dd; }
.m-opt { display: flex; gap: 16px; margin-top: 8px; }
.m-opt.two { margin-top: 16px; }
.m-opt .radio { margin-top: 4px; }
.m-alert { margin-top: 40px; height: 184px; border: 4px solid #855f1a; border-radius: 24px; background: #fffef0; display: flex; gap: 16px; padding: 27px 32px 0; }
.m-alert > svg { margin-top: 5px; }
.m-alert b { letter-spacing: -.0325em; }
.m-alert a { color: #2c66dd; border-bottom: 2px solid #2c66dd; padding-bottom: 1px; }
.ext { display: inline-block; vertical-align: -4px; margin-left: 2px; }
.m-foot { display: flex; justify-content: flex-end; align-items: center; padding: 24px 40px 0; gap: 61px; color: #2c66dd; height: 88px; }
.btn { width: 287px; height: 64px; line-height: 64px; border-radius: 32px; background: #f29e38; color: #0f141a; text-align: center; }

/* Console footer */
.aws-foot { flex: 1; background: #161d26; border-top: 2px solid #3c424c; font-size: 24px; letter-spacing: -.022em; color: #f0f0f3; }
.f1 { height: 68px; display: flex; align-items: center; padding: 0 31px 0 32px; gap: 51px; }
.f1 .cs, .shot-foot .cs { margin-left: -41px; }
.f1 .cs, .f1 .fb-link { letter-spacing: -.01em; }
.f1 .push, .shot-foot .push { margin-left: auto; }
.f2 { text-align: center; color: #c6c6cd; line-height: 40px; letter-spacing: -.0087em; }

/* PDF viewer */
.pdf-bar { height: 110px; flex: none; background: #3b3b3b; color: #f1f1f1; display: grid; align-items: center; padding-left: 31px; font: 24px Inter, sans-serif; letter-spacing: -.01em; white-space: nowrap;
  grid-template-columns: 77px 107px 29px 66px 51px 15px 74px 30px 59px 34px 64px 140px 69px 87px 1fr; }
.pdf-bar i { width: 2px; height: 40px; background: #696969; }
.pg { width: 68px; height: 40px; line-height: 40px; text-align: center; background: #1f1f1f; }
.viewer { flex: 1; display: grid; grid-template: 1422px 30px / 970px 29px; background: #fbfbfb; min-height: 0; }
.pages { overflow: hidden; background: #262626; border-bottom: 2px solid #e2e2e2; }
.vscroll { border-left: 2px solid #e5e5e5; background: #fafafa; padding: 127px 0 0 5px; }
.vscroll i { display: block; width: 16px; height: 20px; border-radius: 8px; background: #c1c1c1; }
.hscroll { grid-column: 1 / 3; background: #fafafa; padding: 8px 0 0 80px; }
.hscroll i { display: block; width: 788px; height: 16px; border-radius: 8px; background: #c1c1c1; }
.page { background: #fff; width: 970px; overflow: hidden; white-space: nowrap; font-family: Cambria, Caladea, "Liberation Serif", serif; color: #000; }
.p1 { height: 204px; padding-top: 57px; font-size: 24px; line-height: 32px; }
.ph { display: flex; justify-content: space-between; padding: 0 130px 0 56px; letter-spacing: .015em; }
.roll { letter-spacing: .073em; }
.pn { text-align: center; margin: 21px 0 0; width: 992px; font-size: 22px; letter-spacing: .005em; }
.p2 { margin-top: 20px; height: 1220px; }
.doc-head { display: flex; height: 212px; padding-top: 67px; }
.chit { width: 116px; display: flex; justify-content: flex-end; height: 50px; }
.words { width: 63px; margin-right: 5px; display: flex; flex-direction: column; align-items: flex-end; color: #333; }
.words b { font: 800 23px/22px "Open Sans", sans-serif; transform: scaleX(.78); transform-origin: right; margin-top: 14px; letter-spacing: -.02em; }
.words span { font: 18px/16px "Liberation Serif", serif; transform: scaleX(.88); transform-origin: right; margin-top: -1px; }
.titles { width: 835px; text-align: center; font-weight: 700; padding-top: 7px; }
.t1 { font-size: 28px; line-height: 32px; letter-spacing: -.001em; }
.t3 { font-size: 20px; line-height: 24px; font-style: italic; padding-right: 75px; margin-top: -1px; letter-spacing: .002em; }
.cap { font-size: 24.200px; font-weight: 700; line-height: 28px; text-align: center; padding-top: 3px; height: 29px; width: 992px; }

/* Figure: instance type */
.fig1 { height: 385px; width: 980px; margin-left: 95px; border: 2px solid #111; border-right: 0; background: #fbfbfb; display: flex; gap: 22px; padding-left: 19px; overflow: hidden; font: 11.500px/16px "Open Sans", sans-serif; letter-spacing: -.02em; color: #20242c; }
.fl { width: 698px; flex: none; }
.fc { border: 1px solid #d5d6da; border-radius: 14px; background: #fff; padding: 12px 17px; }
.fa { height: 92px; border-top: 0; border-radius: 0 0 14px 14px; }
.fa b, .fa span { display: block; margin-bottom: 4px; }
.fb { height: 210px; margin-top: 17px; }
.fd { height: 80px; margin-top: 17px; padding-top: 11px; }
h3 { font-size: 15.500px; line-height: 22px; display: flex; align-items: center; letter-spacing: -.01em; }
h3 svg { margin-right: 11px; }
h3 small { font-size: 10.200px; margin-left: 10px; color: #2c66dd; letter-spacing: 0; line-height: 20px; padding-top: 3px; font-weight: 600; }
h3 u { text-decoration: none; font-weight: 400; margin: 0 -7px 0 3px; }
h3 u + small { letter-spacing: -.02em; }
.fit { display: block; margin: 10px 0 5px; }
.frow { display: flex; gap: 26px; }
.fsel { width: 485px; height: 105px; border: 1px solid #9a9ca4; border-radius: 6px; padding: 3px 11px 0 9px; display: flex; justify-content: space-between; }
.fsel svg { margin-top: 46px; color: #0d2a66; }
.fsel span { display: block; }
.fsel p { font-size: 10.200px; line-height: 13.800px; color: #6b6e78; letter-spacing: -.01em; }
.spec { display: flex; gap: 14px; }
.fopt { padding-top: 29px; }
.fopt div { display: flex; gap: 7px; height: 31px; align-items: flex-start; line-height: 16px; letter-spacing: .01em; }
.tog { width: 21px; height: 13px; border-radius: 7px; background: radial-gradient(circle at 6.500px 6.500px, #fff 4.500px, #424650 5px); margin-top: 1px; }
.lk { color: #2c66dd; }
.fopt .lk { letter-spacing: -.02em; position: relative; top: -1px; }
.fadd .lk { letter-spacing: -.004em; }
.fadd { margin-top: 3px; display: flex; position: relative; }
.tip { position: absolute; left: 298px; top: -2px; width: 44px; height: 20px; background: #222; color: #aaa; font-size: 9.500px; line-height: 20px; text-align: center; }
.fadd .lk { width: 298px; overflow: hidden; }
.fr { flex: none; width: 300px; border: 1px solid #d5d6da; border-top: 0; border-radius: 0 0 0 14px; background: #fff; height: 367px; padding-left: 16px; }
.fnum { border: 1px solid #9a9ca4; border-radius: 6px; height: 27px; width: 200px; margin-top: 5px; padding-left: 10px; line-height: 26px; }
.fsum { margin-top: 10px; border-top: 1px solid #e3e4e8; padding-top: 13px; height: 232px; display: flex; flex-direction: column; letter-spacing: 0; }
.fsum span { margin: 1px 0 18px; }
.fsum .a { margin: 2px 0 0; }
.fsum .b { margin: -1px 0 16px; font-size: 10.200px; color: #555963; }
.fcan { margin-left: -16px; border-top: 1px solid #d5d6da; padding: 21px 0 0 35px; }

/* Figure: dialog over the form, drawn at full size and scaled down */
.fig2 { width: 869px; height: 398px; margin: 49px 0 0 93px; overflow: hidden; }
.shot { width: 2880px; height: 1319px; transform: scale(.3017); transform-origin: 0 0; position: relative; background: #626771; font-family: "Open Sans", sans-serif; color: #30353f; display: flex; overflow: hidden; }
.shot .modal { left: 823px; top: 51px; }
.shot-main { width: 1845px; margin: 0 49px 0 12px; flex: none; }
.shot-main .card { width: 1845px; padding-left: 36px; }
.shot .c1 { height: 211px; position: relative; }
.shot .sel.top { height: 121px; width: 1294px; justify-content: space-between; color: #353a46; }
.shot .sel.top p { line-height: 32px; letter-spacing: -.008em; }
.shot .sel.top div { margin-top: -17px; }
.shot .sel.top svg { margin: 4px 14px 0 0; color: #28427b; }
.cmp { position: absolute; left: 1394px; top: 25px; }
.shot .c2 { margin-top: 43px; }
.shot .c3 { margin-top: 40px; }
.shot-side { width: 897px; height: 1002px; border: 2px solid #555963; border-radius: 0 0 32px 32px; border-top: 0; padding: 28px 41px 0; }
.shot-side .r { margin-top: 25px; }
.shot-side .sel { width: 815px; margin-top: 10px; }
.ss { border-top: 2px solid #555963; margin-top: 24px; padding-top: 29px; height: 545px; display: flex; flex-direction: column; }
.ss b { display: block; }
.ss span { display: flex; margin-bottom: 40px; }
.ss span:nth-child(2) { margin-bottom: 0; }
.ss small { font-size: 24px; margin-bottom: 42px; line-height: 36px; }
.sb { border-top: 2px solid #4d525c; margin: 0 -41px; padding: 40px 41px 0 85px; display: flex; justify-content: space-between; line-height: 64px; }
.shot-side .launch { background: #8d6838; border-radius: 32px; width: 300px; text-align: center; }
.sp { display: flex; justify-content: flex-end; gap: 16px; margin: 24px 44px 0 0; color: #28427b; }
.shot-foot { position: absolute; left: 0; right: 0; bottom: 0; height: 36px; background: #161d26; color: #f0f0f3; display: flex; gap: 51px; padding: 12px 28px 0 0; font-size: 24px; letter-spacing: -.015em; }
.shot-foot svg { margin-left: -8px; margin-top: 8px; }
```
